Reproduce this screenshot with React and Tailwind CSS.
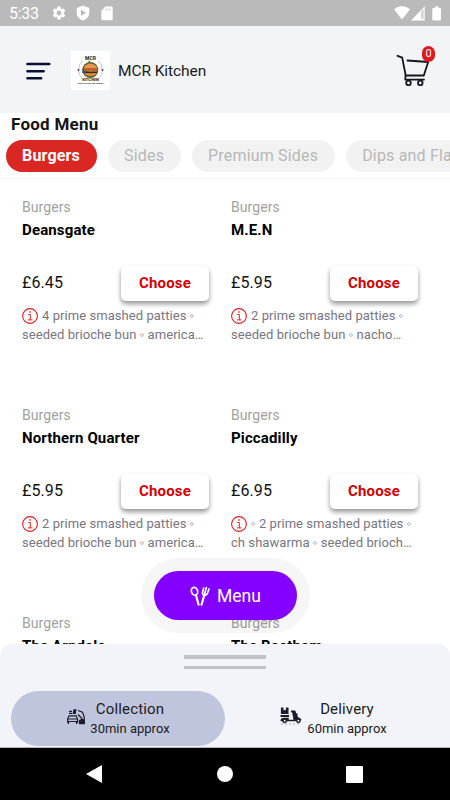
import React from 'react';
import { MdSettings } from 'react-icons/md';

const categories = ['Burgers', 'Sides', 'Premium Sides', 'Dips and Flavours'];

const items = [
  { name: 'Deansgate', price: '£6.45', lines: ['4 prime smashed patties ◦', 'seeded brioche bun ◦ america…'] },
  { name: 'M.E.N', price: '£5.95', lines: ['2 prime smashed patties ◦', 'seeded brioche bun ◦ nacho…'] },
  { name: 'Northern Quarter', price: '£5.95', lines: ['2 prime smashed patties ◦', 'seeded brioche bun ◦ america…'] },
  { name: 'Piccadilly', price: '£6.95', lines: ['◦ 2 prime smashed patties ◦', 'ch shawarma ◦ seeded brioch…'] },
  { name: 'The Arndale' },
  { name: 'The Beetham' },
];

const StatusBar = () => (
  <div className="h-[26px] shrink-0 bg-[#bababa] flex items-center justify-between pl-[9px] pr-2 text-white">
    <div className="flex items-center">
      <span className="w-[42px] text-base leading-none tracking-[-0.3px] pt-[2px]">5:33</span>
      <MdSettings className="w-4 h-4" />
      <svg className="w-[14px] h-4 ml-[9px]" viewBox="0 0 14 16">
        <path fill="currentColor" fillRule="evenodd" d="M7 0.5L13.3 3v4.8c0 3.700-2.700 6.600-6.300 7.700C3.400 14.400.7 11.500.7 7.800V3L7 .5zM4.900 4.700v6.200L10.200 7.800 4.900 4.700z" />
      </svg>
      <svg className="w-3 h-[15px] ml-[11px]" viewBox="0 0 12 15">
        <path fill="currentColor" fillRule="evenodd" d="M4.500 .5H10.500Q11.700.5 11.700 1.700V13Q11.700 14.300 10.500 14.300H1.500Q.3 14.300.3 13V4.700L4.500.5zM4.500 2.400V4.600H5.300V2.400zM6.500 2.400V4.600H7.300V2.400zM8.500 2.400V4.600H9.300V2.400z" />
      </svg>
    </div>
    <div className="flex items-center">
      <svg className="w-4 h-[14px]" viewBox="0 0 16 14">
        <path fill="currentColor" d="M0 3.300C4.700-.7 11.300-.7 16 3.300L8 13.500z" />
      </svg>
      <svg className="w-[14px] h-[15px] ml-[1px]" viewBox="0 0 14 15">
        <path fill="currentColor" fillRule="evenodd" d="M13.700.3V14.500H0zM10.200 5.300V13H12.500V3z" />
        <path fill="currentColor" opacity="0.35" d="M10.200 5.300V13H12.500V3z" />
      </svg>
      <svg className="w-[10px] h-[15px] ml-[7px]" viewBox="0 0 10 15">
        <path fill="currentColor" d="M3 .5h3.500v1.500H8q1 0 1 1V13.500q0 1-1 1H1.300q-1 0-1-1V3q0-1 1-1H3z" />
      </svg>
    </div>
  </div>
);

const KitchenLogo = () => (
  <svg className="w-[39px] h-[39px] ml-[20px] bg-white" viewBox="0 0 39 39">
    <path d="M11.500 10Q7.500 13.500 7.500 19Q7.500 24 11 27M27 10Q31.500 13.500 31.500 19Q31.500 24 28 27" fill="none" stroke="#b4b9cb" strokeWidth="0.900" />
    <circle cx="19.300" cy="19" r="8" fill="#5d6535" />
    <path d="M13 17.500c.5-6.200 12.500-6.200 13 0z" fill="#e5984d" />
    <path d="M12.500 17.500h14v2h-14z" fill="#db4d2b" />
    <path d="M12.500 19.500h14l-2 1.300-2-.8-2 1.200-3-1z" fill="#b99a35" />
    <path d="M13 20.800h13v1.500H13z" fill="#4b2618" />
    <path d="M13.500 22.300h12c0 3.500-12 3.500-12 0z" fill="#e58b3e" />
    <path d="M12 17.500v4h2.500" stroke="#2e4b94" strokeWidth="1.200" fill="none" />
    <circle cx="7.500" cy="19" r="1" fill="#7e2b35" />
    <circle cx="31.500" cy="19" r="1" fill="#7e2b35" />
    <text x="19.500" y="9.200" fontSize="5" fontWeight="900" textAnchor="middle" fill="#403a14">MCR</text>
    <path d="M18.300 9.700v1.600" stroke="#333" strokeWidth="1.200" />
    <text x="19.500" y="30" fontSize="4" fontWeight="900" textAnchor="middle" fill="#403a14">KITCHEN</text>
    <text x="20" y="33.400" fontSize="2.300" fontWeight="700" textAnchor="middle" fill="#222">Food Served your Hunger…</text>
  </svg>
);

const CartIcon = () => (
  <svg className="w-[34px] h-8" viewBox="0 0 34 32" fill="none" stroke="#171421" strokeWidth="1.800" strokeLinecap="round" strokeLinejoin="round">
    <path d="M1.500 1.800L6.200 3.700L9.700 21.500H27.800L32.200 8L11.500 6.500" />
    <path d="M9.500 22L9.300 25.600H28" />
    <circle cx="12.500" cy="29" r="2.300" />
    <circle cx="24.300" cy="29" r="2.300" />
  </svg>
);

const Header = () => (
  <header className="h-[87px] shrink-0 bg-[#f2f4f6] flex items-center pt-[2px] pl-[26px] pr-[20px]">
    <svg className="w-[25px] h-[18px]" viewBox="0 0 25 18" stroke="#090d37" strokeWidth="2.400" strokeLinecap="round">
      <path d="M1.400 2H23.300M1.400 9.200H17.700M1.400 16.300H15.200" />
    </svg>
    <KitchenLogo />
    <span className="ml-2 text-[15.500px] leading-5 tracking-[-0.080px] text-[#1b1b1d]">MCR Kitchen</span>
    <div className="relative ml-auto mb-[2px]">
      <CartIcon />
      <span className="absolute left-[26px] -top-[8px] w-[13px] h-[16px] rounded-[7px] bg-[#de1a1d] text-white text-[11px] leading-4 text-center">0</span>
    </div>
  </header>
);

const InfoIcon = () => (
  <svg className="inline-block w-4 h-4 mr-[4px] align-[-4px]" viewBox="0 0 16 16" fill="none" stroke="#dc1c20">
    <circle cx="8" cy="8" r="7.400" strokeWidth="1.100" />
    <path d="M6.300 6.500H8.300V11.800M5.900 11.900H10.500" strokeWidth="1" />
    <path d="M7.300 4H8.700" strokeWidth="1.300" />
  </svg>
);

const MenuItem = ({ item }) => (
  <div className="h-[208px] flex flex-col">
    <p className="text-sm leading-5 tracking-[0.080px] text-[#a1a1a1]">Burgers</p>
    <h3 className="mt-[3px] text-[15px] leading-5 font-bold tracking-[0.14px] text-black whitespace-nowrap">{item.name}</h3>
    {item.price && (
      <>
        <div className="mt-[25px] flex items-center justify-between h-[36px]">
          <span className="text-base tracking-[0.1px] text-[#111]">{item.price}</span>
          <button className="w-[88px] h-[35px] rounded-[5px] bg-white text-[15px] font-bold tracking-[0.2px] text-[#d70000] shadow-[0_3px_5px_rgba(0,0,0,0.42)]">
            Choose
          </button>
        </div>
        <p className="mt-[5px] text-[13px] leading-[19px] tracking-[0.060px] text-[#777681] whitespace-nowrap">
          <InfoIcon />
          {item.lines[0]}
          <br />
          {item.lines[1]}
        </p>
      </>
    )}
  </div>
);

const UtensilsIcon = () => (
  <svg className="w-5 h-5" viewBox="0 0 20 20" fill="none" stroke="white" strokeWidth="1.700" strokeLinecap="round">
    <ellipse cx="4.500" cy="5.300" rx="3.100" ry="4" transform="rotate(-18 4.500 5.300)" />
    <path d="M6 9.300L8.600 18.700" strokeWidth="2.200" />
    <path d="M13.700 2L12.500 6.700Q12.300 9 14.300 9.300Q16.500 9.500 17.300 7.700L19 3M16.400 1.500L14.500 8.500" />
    <path d="M14.200 9.500L11.500 18.700" strokeWidth="2.200" />
  </svg>
);

const CollectionIcon = () => (
  <svg className="w-[18px] h-[16px] -mt-[3px]" viewBox="0 0 18 16" fill="none" stroke="#1c1d2c" strokeWidth="1.200">
    <path d="M2 2.300H5M2 4.300H5M6.300 4.300L7 1L8.700 .7L8.300 4.300z" fill="#1c1d2c" />
    <path d="M.7 14V10L2 6.800H9.200L10.500 10V14M.7 10H10.500M.7 12.500H10.500M1.500 13V15M9.500 13V15" />
    <path d="M11 1.500L15.500 3.300L17.300 8V14.500M11 5.500L15 9.500" />
    <path d="M12.500 11.500L15.500 10L17.300 12V14.700H12.500z" fill="#1c1d2c" />
  </svg>
);

const DeliveryIcon = () => (
  <svg className="w-[22px] h-[18px] -mt-[5px]" viewBox="0 0 22 18" fill="#1b1c29">
    <path d="M.9.5H3.500V3.500L4.700 2.800L5.900 3.500V.5H8.500V7H.9zM.5 8H9V10H.5z" />
    <path d="M.5 13.700Q.5 10.800 4 10.700H8.700V12.700H13.500L12.200 5.600L11 5.300V3.600H14.700Q16 4 16.300 6.500H17.700V8.300H17L18.500 10.600Q21.300 11.300 21.700 13.300L18 12L15.500 14.300H1z" />
    <g stroke="#1b1c29" strokeWidth="1.500" fill="#f2f4fa">
      <circle cx="4.700" cy="13.700" r="1.700" />
      <circle cx="18.400" cy="13.700" r="1.700" />
    </g>
    <path d="M1 17H21" stroke="#a7a8b2" strokeWidth="0.900" strokeDasharray="2 2" />
  </svg>
);

const OrderOption = ({ icon, label, time, className }) => (
  <button className={`w-[214px] h-[55px] rounded-full flex items-center text-[#1b1b20] ${className}`}>
    {icon}
    <span className="w-[80px] ml-[5px] flex flex-col items-center">
      <span className="text-[15px] leading-5 tracking-[0.15px]">{label}</span>
      <span className="text-[13px] leading-5 whitespace-nowrap">{time}</span>
    </span>
  </button>
);

const App = () => {
  return (
    <div className="relative w-[450px] h-[800px] overflow-hidden bg-white flex flex-col font-['Roboto',sans-serif]">
      <StatusBar />
      <Header />

      {/* Category tabs */}
      <section className="h-[66px] shrink-0 border-b border-[#f5f5f5] overflow-hidden">
        <h2 className="pl-[11px] pt-[1px] text-[17px] leading-5 font-bold tracking-[0.25px] text-[#151515]">Food Menu</h2>
        <div className="mt-[6px] pl-[5.500px] flex">
          {categories.map((category, i) => (
            <button
              key={category}
              className={`h-8 px-[16.500px] mr-[11px] rounded-full shrink-0 text-base whitespace-nowrap tracking-[0.18px] ${
                i === 0 ? 'bg-[#d92723] text-white font-bold' : 'bg-[#f2f2f2] text-[#b7b7b7]'
              }`}
            >
              {category}
            </button>
          ))}
        </div>
      </section>

      {/* Menu items */}
      <main className="flex-1 min-h-0 overflow-hidden pt-[18px] pl-[22px] grid grid-cols-[187px_187px] gap-x-[22px] content-start">
        {items.map((item) => (
          <MenuItem key={item.name} item={item} />
        ))}
      </main>

      {/* Floating menu button */}
      <div className="absolute left-[141px] top-[558px] w-[169px] h-[75px] rounded-full bg-black/[0.035] p-[13px]">
        <button className="w-[143px] h-[49px] rounded-full bg-[#8400ff] text-white flex items-center justify-center gap-[7px]">
          <UtensilsIcon />
          <span className="text-[17.500px] leading-6">Menu</span>
        </button>
      </div>

      {/* Order type sheet */}
      <div className="-mt-px h-[104px] shrink-0 bg-[#f2f4fa] rounded-t-[12px] border-b border-[#b5b6bb]">
        <div className="pt-[11px] flex flex-col items-center gap-[7px]">
          <div className="w-[82px] h-[4px] bg-[#c1c2c6]" />
          <div className="w-[82px] h-[3px] bg-[#c1c2c6]" />
        </div>
        <div className="mt-[22px] pl-[11px] flex">
          <OrderOption icon={<CollectionIcon />} label="Collection" time="30min approx" className="bg-[#bfc5dc] pl-[56px]" />
          <OrderOption icon={<DeliveryIcon />} label="Delivery" time="60min approx" className="pl-[55px]" />
        </div>
      </div>

      {/* Android navigation */}
      <nav className="h-[52px] shrink-0 bg-black flex items-center pl-[86px]">
        <svg className="w-4 h-[18px]" viewBox="0 0 16 18" fill="white">
          <path d="M16 0V18L0 9z" />
        </svg>
        <div className="ml-[115px] w-4 h-4 rounded-full bg-white" />
        <div className="ml-[113px] w-[17px] h-[17px] rounded-[1px] bg-white" />
      </nav>
    </div>
  );
};

export default App;
